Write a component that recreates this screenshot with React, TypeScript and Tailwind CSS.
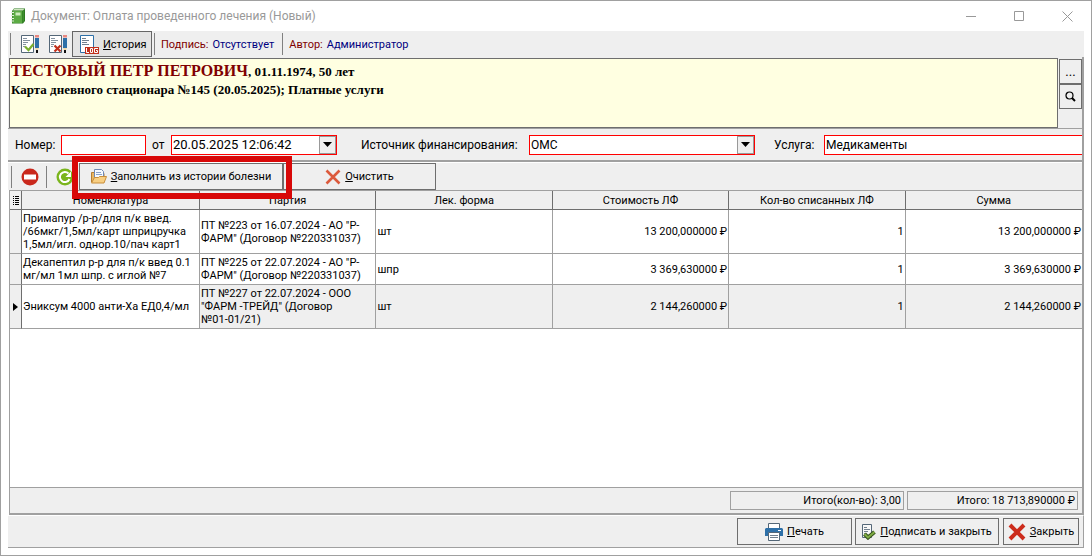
import React, { useState } from 'react'

interface Row {
  id: number
  name: string
  batch: string
  form: string
  price: string
  count: string
  sum: string
}

const rows: Row[] = [
  {
    id: 1,
    name: 'Примапур /р-р/для п/к введ.\n/66мкг/1,5мл/карт шприцручка\n1,5мл/игл. однор.10/пач карт1',
    batch: 'ПТ №223 от 16.07.2024 - АО "Р-\nФАРМ" (Договор №220331037)',
    form: 'шт',
    price: '13 200,000000 ₽',
    count: '1',
    sum: '13 200,000000 ₽',
  },
  {
    id: 2,
    name: 'Декапептил р-р для п/к введ 0.1\nмг/мл 1мл шпр. с иглой №7',
    batch: 'ПТ №225 от 22.07.2024 - АО "Р-\nФАРМ" (Договор №220331037)',
    form: 'шпр',
    price: '3 369,630000 ₽',
    count: '1',
    sum: '3 369,630000 ₽',
  },
  {
    id: 3,
    name: 'Эниксум 4000 анти-Ха ЕД0,4/мл',
    batch: 'ПТ №227 от 22.07.2024 - ООО\n"ФАРМ -ТРЕЙД" (Договор\n№01-01/21)',
    form: 'шт',
    price: '2 144,260000 ₽',
    count: '1',
    sum: '2 144,260000 ₽',
  },
]

const columns = ['Номенклатура', 'Партия', 'Лек. форма', 'Стоимость ЛФ', 'Кол-во списанных ЛФ', 'Сумма']

export default function App() {
  const [selected, setSelected] = useState(3)

  return (
    <div className="flex min-h-screen flex-col border border-[#a0a0a0] bg-white font-['Roboto',sans-serif] text-[11px] leading-[13px] text-black">
      <TitleBar />

      <div className="mx-[7px] mb-[7px] flex flex-1 flex-col">
        <DocumentToolbar />
        <div className="flex flex-1 flex-col border-r-2 border-[#a0a0a0]">
          <PatientCard />
          <DocumentFields />
          <TableToolbar />
          <div className="ml-px flex-1 border-t border-l border-[#a0a0a0]">
            <ItemsTable selected={selected} onSelect={setSelected} />
          </div>
          <Totals />
        </div>
        <BottomBar />
      </div>
    </div>
  )
}

function TitleBar() {
  return (
    <header className="flex h-[30px] items-center pl-[9px] text-xs text-[#999999]">
      <BookIcon />
      <h1 className="ml-[5px] flex-1">Документ: Оплата проведенного лечения (Новый)</h1>
      <div className="flex">
        <button aria-label="Свернуть" className="flex h-[30px] w-12 items-center justify-center">
          <svg width="10" height="10" viewBox="0 0 10 10" stroke="#999">
            <path d="M0 5.5h10" />
          </svg>
        </button>
        <button aria-label="Развернуть" className="flex h-[30px] w-12 items-center justify-center">
          <svg width="10" height="10" viewBox="0 0 10 10" fill="none" stroke="#999">
            <path d="M.5.5h9v9h-9z" />
          </svg>
        </button>
        <button aria-label="Закрыть окно" className="flex h-[30px] w-12 items-center justify-center">
          <svg width="11" height="11" viewBox="0 0 11 11" stroke="#999">
            <path d="M.5.5l10 10M10.5.5l-10 10" />
          </svg>
        </button>
      </div>
    </header>
  )
}

function Separator() {
  return <span className="h-[22px] w-px bg-[#808080]" />
}

function DocumentToolbar() {
  return (
    <div className="flex h-[26px] items-center bg-[#efefef] pl-[2px]">
      <Separator />
      <button aria-label="Подписать" className="ml-[10px]">
        <SignIcon>
          <path d="M4 11.500l3.500 3.500L12.500 9" fill="none" stroke="#7ab030" strokeWidth="2.200" />
        </SignIcon>
      </button>
      <button aria-label="Снять подпись" className="ml-[10px]">
        <SignIcon>
          <path d="M5.500 10.500l6 6M11.500 10.500l-6 6" fill="none" stroke="#c0301c" strokeWidth="2.200" />
        </SignIcon>
      </button>
      <button className="ml-[5px] flex h-[26px] w-20 items-center border border-[#666666] bg-[#e4e4e4] pl-[7px]">
        <LogIcon />
        <span className="ml-1">
          <u>И</u>стория
        </span>
      </button>
      <div className="mr-[6px] ml-[2px] flex">
        <Separator />
      </div>
      <span className="text-[#800000]">Подпись:</span>
      <span className="ml-1 text-[#000080]">Отсутствует</span>
      <div className="mr-[6px] ml-2 flex">
        <Separator />
      </div>
      <span className="text-[#800000]">Автор:</span>
      <span className="ml-1 text-[#000080]">Администратор</span>
    </div>
  )
}

function PatientCard() {
  return (
    <section className="flex border-b border-[#a0a0a0] bg-[#efefef] pt-px pl-px">
      <div className="h-[70px] flex-1 border border-[#6e6e6e] bg-[#ffffe1] pt-[3px] pl-px font-['Liberation_Serif',serif] text-[13px] leading-[18px] font-bold">
        <p>
          <span className="text-base leading-[18px] text-[#800000]">ТЕСТОВЫЙ ПЕТР ПЕТРОВИЧ</span>, 01.11.1974, 50 лет
        </p>
        <p>Карта дневного стационара №145 (20.05.2025); Платные услуги</p>
      </div>
      <div className="flex w-6 flex-col pt-px pl-px">
        <button className="h-[25px] border border-[#6e6e6e] text-[13px]">...</button>
        <button aria-label="Найти" className="flex h-[25px] items-center justify-center border border-[#6e6e6e]">
          <svg width="11" height="11" viewBox="0 0 11 11" fill="none" stroke="#000">
            <circle cx="4.500" cy="4.500" r="3.500" strokeWidth="1.200" />
            <path d="M7 7l3 3" strokeWidth="2" />
          </svg>
        </button>
      </div>
    </section>
  )
}

function DropArrow() {
  return (
    <svg width="9" height="5" viewBox="0 0 9 5">
      <path d="M0 0h9L4.500 5z" fill="#000" />
    </svg>
  )
}

function DocumentFields() {
  const field = 'h-5 border border-[#ff0000] bg-white'

  return (
    <section className="flex h-[33px] items-center overflow-hidden border-b-2 border-[#a0a0a0] bg-[#efefef] pl-[7px] text-xs">
      <label htmlFor="number" className="w-[46px] shrink-0">
        Номер:
      </label>
      <input id="number" className={`${field} w-[85px] shrink-0 px-px`} />
      <label htmlFor="date" className="ml-[6px] w-[19px] shrink-0">
        от
      </label>
      <div className={`${field} flex w-[166px] shrink-0`}>
        <input id="date" defaultValue="20.05.2025 12:06:42" className="min-w-0 flex-1 pl-px text-[13px]" />
        <button
          aria-label="Выбрать дату"
          className="flex w-[17px] items-center justify-center border border-[#999999] bg-[#efefef]"
        >
          <DropArrow />
        </button>
      </div>
      <label htmlFor="source" className="ml-6 w-[168px] shrink-0 whitespace-nowrap">
        Источник финансирования:
      </label>
      <div className={`${field} relative w-[226px] shrink-0`}>
        <select id="source" className="block h-[18px] w-full appearance-none pl-px">
          <option>ОМС</option>
          <option>Платные услуги</option>
        </select>
        <span className="pointer-events-none absolute inset-y-0 right-0 flex w-[17px] items-center justify-center border border-[#999999] bg-[#efefef]">
          <DropArrow />
        </span>
      </div>
      <label htmlFor="service" className="ml-[19px] w-[50px] shrink-0">
        Услуга:
      </label>
      <input
        id="service"
        defaultValue="Медикаменты"
        className="h-5 min-w-0 flex-1 border border-r-0 border-[#ff0000] bg-white pl-px"
      />
    </section>
  )
}

function TableToolbar() {
  return (
    <div className="flex h-7 items-center border-t border-white bg-[#efefef] pl-[3px]">
      <Separator />
      <button aria-label="Удалить строку" className="ml-[9px]">
        <svg width="18" height="18" viewBox="0 0 18 18">
          <circle cx="9" cy="9" r="8.500" fill="#c9281c" />
          <path d="M3 6.500h12v5H3z" fill="#fff" />
        </svg>
      </button>
      <div className="mr-[9px] ml-[7px] flex">
        <Separator />
      </div>
      <button aria-label="Обновить">
        <svg width="18" height="18" viewBox="0 0 18 18">
          <circle cx="9" cy="9" r="8.500" fill="#7ab51d" />
          <path d="M12.500 5.500A5 5 0 1 0 13.500 11" fill="none" stroke="#fff" strokeWidth="2" />
          <path d="M15 3.500v5.500H9.500z" fill="#fff" />
        </svg>
      </button>
      <div className="relative ml-[5px] flex h-[27px]">
        <button className="flex w-[204px] items-center justify-center border border-[#6e6e6e]">
          <FolderIcon />
          <span className="ml-1">
            <u>З</u>аполнить из истории болезни
          </span>
        </button>
        {/* Highlight frame round the fill button */}
        <div className="pointer-events-none absolute -top-[7px] -left-[7px] h-[43px] w-[220px] border-6 border-[#d80808]" />
      </div>
      <button className="flex h-[27px] w-[153px] items-center justify-center border border-[#6e6e6e]">
        <svg width="16" height="16" viewBox="0 0 16 16">
          <path d="M1.500 1.500L8 8l6.500 6.500M14.500 1.500L8 8l-6.500 6.500" stroke="#dc5a3c" strokeWidth="2.600" />
        </svg>
        <span className="ml-1">
          <u>О</u>чистить
        </span>
      </button>
    </div>
  )
}

function ItemsTable({ selected, onSelect }: { selected: number; onSelect: (id: number) => void }) {
  const cell = 'border-r border-b border-[#a0a0a0] px-px py-[2px]'

  return (
    <table className="w-full table-fixed border-separate border-spacing-0">
      <colgroup>
        <col className="w-3" />
        <col className="w-[178px]" />
      </colgroup>
      <thead>
        <tr className="h-[19px] bg-[#efefef]">
          <th className="border-r border-b border-[#6e6e6e]">
            <svg width="6" height="9" viewBox="0 0 6 9" className="mx-auto" stroke="#000">
              <path d="M0 .5h1M2 .5h4M0 2.500h1M2 2.500h4M0 4.500h1M2 4.500h4M0 6.500h1M2 6.500h4M0 8.500h1M2 8.500h4" />
            </svg>
          </th>
          {columns.map((column) => (
            <th key={column} className="border-r border-b border-[#6e6e6e] font-normal last:border-r-0">
              {column}
            </th>
          ))}
        </tr>
      </thead>
      <tbody>
        {rows.map((row) => (
          <tr
            key={row.id}
            onClick={() => onSelect(row.id)}
            className={row.id === selected ? 'bg-[#efefef]' : 'bg-white'}
          >
            <td className="border-r border-b border-r-[#6e6e6e] border-b-[#a0a0a0] bg-[#efefef]">
              {row.id === selected && (
                <svg width="5" height="8" viewBox="0 0 5 8" className="mx-auto">
                  <path d="M0 0l5 4-5 4z" fill="#000" />
                </svg>
              )}
            </td>
            <td className={`${cell} bg-white whitespace-pre-line`}>{row.name}</td>
            <td className={`${cell} whitespace-pre-line`}>{row.batch}</td>
            <td className={cell}>{row.form}</td>
            <td className={`${cell} text-right`}>{row.price}</td>
            <td className={`${cell} text-right`}>{row.count}</td>
            <td className={`${cell} border-r-0 text-right`}>{row.sum}</td>
          </tr>
        ))}
      </tbody>
    </table>
  )
}

function Totals() {
  const box = 'flex h-[19px] items-center justify-end border border-[#a0a0a0] pr-[2px]'

  return (
    <div className="ml-px flex h-7 items-center justify-end gap-[3px] border-t border-b-2 border-l border-[#a0a0a0] bg-[#efefef] pr-1">
      <div className={`${box} w-[174px]`}>Итого(кол-во): 3,00</div>
      <div className={`${box} w-[171px]`}>Итого: 18 713,890000 ₽</div>
    </div>
  )
}

function BottomBar() {
  const button = 'flex h-[27px] items-center justify-center border border-[#6e6e6e]'

  return (
    <footer className="flex h-[33px] items-center justify-end border-t border-r border-b border-t-white border-r-[#a0a0a0] border-b-[#a0a0a0] bg-[#efefef] pr-1">
      <button className={`${button} w-[115px]`}>
        <PrinterIcon />
        <span className="ml-1">
          <u>П</u>ечать
        </span>
      </button>
      <button className={`${button} ml-[3px] w-36`}>
        <SignedDocIcon />
        <span className="ml-1">
          <u>П</u>одписать и закрыть
        </span>
      </button>
      <button className={`${button} ml-1 w-[76px]`}>
        <svg width="18" height="18" viewBox="0 0 18 18">
          <path d="M2 2l14 14M16 2L2 16" stroke="#cc2c1c" strokeWidth="4" />
        </svg>
        <span className="ml-1">
          <u>З</u>акрыть
        </span>
      </button>
    </footer>
  )
}

function BookIcon() {
  return (
    <svg width="16" height="16" viewBox="0 0 16 16">
      <path d="M2 3L4 .5h11V13l-2 2.500H2z" fill="#2c7a20" />
      <path d="M4 1h10.500L13 2.500H3z" fill="#cfe6bf" />
      <path d="M2.500 3H12v12H2.500z" fill="#5cab44" />
      <path d="M12.500 3L14 1.500V13l-1.500 2z" fill="#3f8f2e" />
      <path d="M5.500 4.500h5v3h-5z" fill="#cdebbd" />
      <path d="M1 4.500h3M1 7.500h3M1 10.500h3M1 13h3" stroke="#dfeeda" />
    </svg>
  )
}

function SignIcon({ children }: { children: React.ReactNode }) {
  return (
    <svg width="18" height="18" viewBox="0 0 18 18">
      <path d="M.5.5h12v17H.5z" fill="#fff" stroke="#546778" />
      <path d="M2 3.500h4M2 5.500h7M2 7.500h5M2 9.500h3M2 11.500h2" stroke="#8492a0" />
      {children}
      <path d="M14 0h4v2.500h-4z" fill="#e88880" />
      <path d="M14 3h4v10h-4z" fill="#2e70a8" />
      <path d="M14 13h4l-1 2h-2z" fill="#f2d9a8" />
      <path d="M15 15h2v3h-2z" fill="#111" />
    </svg>
  )
}

function LogIcon() {
  return (
    <svg width="19" height="19" viewBox="0 0 19 19">
      <path d="M.5.5h13v17H.5z" fill="#fff" stroke="#2e70a8" />
      <path d="M2 3.500h4M2 5.500h7M2 7.500h5M2 9.500h7" stroke="#71808e" />
      <path d="M5 12h14v7H5z" fill="#c0301c" />
      <path d="M6.500 13v4.500H9M10.500 13.500h2v4h-2zM18 13.500h-3.500v4h3v-2H16" fill="none" stroke="#fff" />
    </svg>
  )
}

function FolderIcon() {
  return (
    <svg width="16" height="15" viewBox="0 0 16 15">
      <path d="M.5 13V3.500h3l1 1H13v4" fill="#e9b765" stroke="#b77e31" />
      <path d="M3.500.5h7l2 2V9h-9z" fill="#f5f9ff" stroke="#7089b5" />
      <path d="M5 3.500h5M5 5.500h6" stroke="#8ba3ca" />
      <path d="M3.500 8.500h4l1-1h7L13 14H.5z" fill="#f8cf83" stroke="#c98e3b" />
    </svg>
  )
}

function PrinterIcon() {
  return (
    <svg width="18" height="18" viewBox="0 0 18 18">
      <path d="M3.500 5V.5h11V5" fill="#fff" stroke="#546778" />
      <path d="M1 5h16l1 1v7H0V6z" fill="#2e70a8" />
      <path d="M13 7.500h3" stroke="#fff" />
      <path d="M3.500 9.500h11v8h-11z" fill="#fff" stroke="#546778" />
      <path d="M5 12.500h8M5 14.500h8" stroke="#71808e" />
    </svg>
  )
}

function SignedDocIcon() {
  return (
    <svg width="14" height="16" viewBox="0 0 14 16">
      <path d="M.5.5h9v13h-9z" fill="#f8f8f8" stroke="#546778" />
      <path d="M2 3.500h3M2 5.500h6M2 7.500h4M2 9.500h2" stroke="#71808e" />
      <path d="M2.500 10L6 13.500 12.500 8" fill="none" stroke="#35521c" strokeWidth="4" />
      <path d="M2.500 10L6 13.500 12.500 8" fill="none" stroke="#80ad45" strokeWidth="2" />
    </svg>
  )
}
